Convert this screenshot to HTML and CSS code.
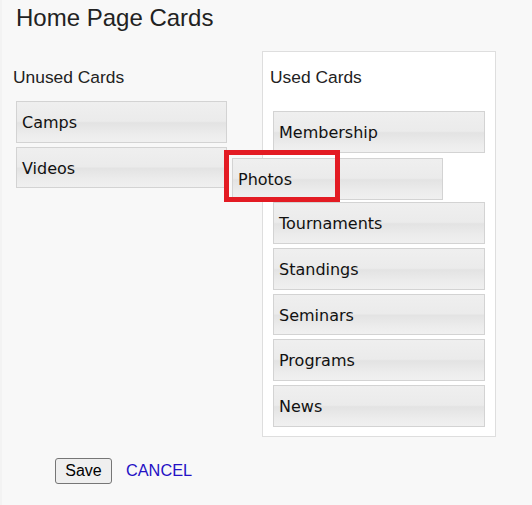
FILE: index.html
```html
<!DOCTYPE html>
<html>
<head>
<meta charset="utf-8">
<link rel="stylesheet" href="styles.css">
</head>
<body>
<div class="page">
  <h1 class="title">Home Page Cards</h1>
  <div class="columns">
    <div class="unused">
      <h3 class="col-title unused-title">Unused Cards</h3>
      <ul class="card-list">
        <li class="card">Camps</li>
        <li class="card">Videos</li>
      </ul>
    </div>
    <div class="used">
      <h3 class="col-title used-title">Used Cards</h3>
      <ul class="card-list">
        <li class="card">Membership</li>
        <li class="card placeholder"></li>
        <li class="card">Tournaments</li>
        <li class="card">Standings</li>
        <li class="card">Seminars</li>
        <li class="card">Programs</li>
        <li class="card">News</li>
      </ul>
    </div>
  </div>
  <div class="actions">
    <button class="save" type="button">Save</button>
    <a class="cancel" href="#">CANCEL</a>
  </div>
  <div class="card helper">Photos</div>
  <div class="highlight"></div>
</div>
</body>
</html>
```
FILE: styles.css
```css
html, body {
  margin: 0;
  padding: 0;
  background: #f8f8f8;
}
.page {
  position: relative;
  min-height: 505px;
  border-left: 2px solid #f3f3f3;
  box-sizing: border-box;
  font-family: "Liberation Sans", Arial, sans-serif;
  color: #222;
}
.title {
  margin: 0;
  padding: 4px 0 0 14px;
  font-size: 24px;
  line-height: 28px;
  font-weight: normal;
  color: #222;
}
.columns {
  display: flex;
  margin-top: 19px;
  align-items: flex-start;
}
.col-title {
  margin: 0;
  font-size: 17.4px;
  line-height: 20px;
  font-weight: normal;
  color: #222;
}
.unused {
  width: 249px;
  margin-left: 11px;
  padding-top: 15.7px;
  box-sizing: border-box;
}
.unused-title {
  margin-bottom: 14.3px;
}
.unused .card-list {
  margin-left: 3px;
  width: 211px;
}
.used {
  width: 234px;
  background: #fff;
  border: 1px solid #dedede;
  box-sizing: border-box;
  padding: 15.3px 0 5.3px 0;
}
.used-title {
  margin-left: 7px;
  margin-bottom: 23.7px;
}
.used .card-list {
  margin: 0 10px;
}
.card-list {
  list-style: none;
  padding: 0;
  margin: 0;
}
.card {
  height: 41.67px;
  box-sizing: border-box;
  margin-bottom: 4px;
  padding: 1px 0 0 5px;
  border: 1px solid #d3d3d3;
  background: linear-gradient(to bottom, #efefef 0%, #ebebeb 48%, #e3e3e3 52%, #ececec 80%, #f0f0f0 100%);
  font-family: "DejaVu Sans", Verdana, sans-serif;
  font-size: 16px;
  line-height: 39px;
  color: #111;
  white-space: nowrap;
}
.card.placeholder {
  visibility: hidden;
}
.actions {
  display: flex;
  align-items: center;
  gap: 14px;
  margin: 21px 0 0 53px;
}
.save {
  font-family: "Liberation Sans", Arial, sans-serif;
  font-size: 16px;
  height: 26px;
  width: 57px;
  padding: 0;
  background: #efefef;
  border: 1px solid #767676;
  border-radius: 3px;
  color: #000;
}
.cancel {
  font-size: 16.3px;
  color: #2511c5;
  text-decoration: none;
}
.helper {
  position: absolute;
  left: 230px;
  top: 158px;
  width: 211px;
  margin: 0;
}
.highlight {
  position: absolute;
  left: 222px;
  top: 150px;
  width: 116px;
  height: 52px;
  box-sizing: border-box;
  border: 5px solid #e31b23;
}
```
